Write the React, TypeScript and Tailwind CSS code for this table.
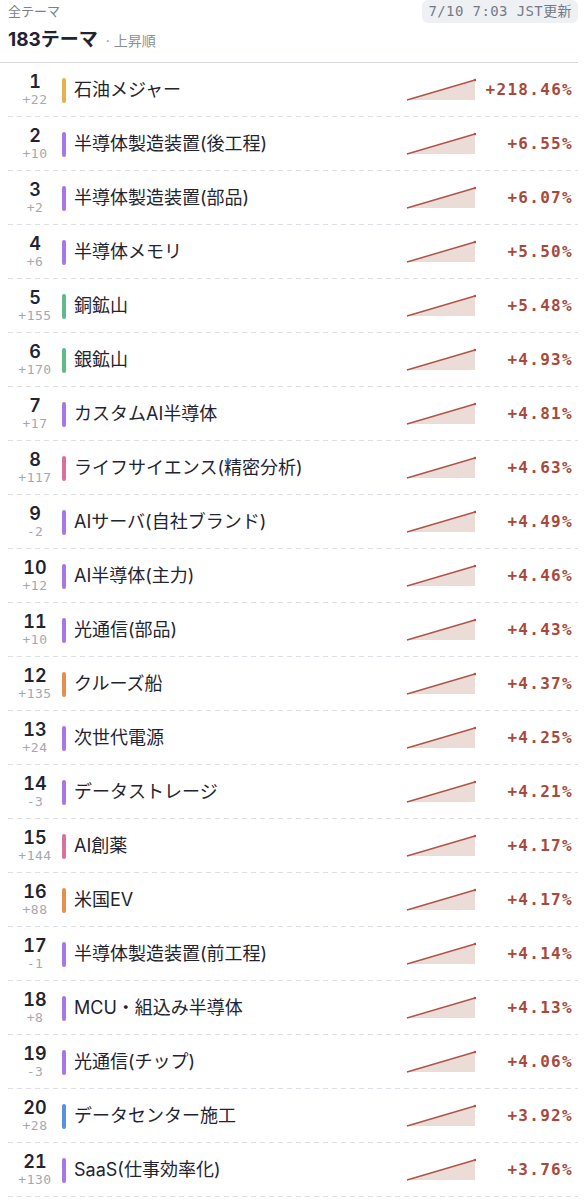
const rows = [
    { rank: 1, chg: '+22', name: '石油メジャー', color: 'bg-[#e6b04e]', pct: '+218.46%' },
    { rank: 2, chg: '+10', name: '半導体製造装置(後工程)', color: 'bg-[#a777e6]', pct: '+6.55%' },
    { rank: 3, chg: '+2', name: '半導体製造装置(部品)', color: 'bg-[#a777e6]', pct: '+6.07%' },
    { rank: 4, chg: '+6', name: '半導体メモリ', color: 'bg-[#a777e6]', pct: '+5.50%' },
    { rank: 5, chg: '+155', name: '銅鉱山', color: 'bg-[#5fbb8b]', pct: '+5.48%' },
    { rank: 6, chg: '+170', name: '銀鉱山', color: 'bg-[#5fbb8b]', pct: '+4.93%' },
    { rank: 7, chg: '+17', name: 'カスタムAI半導体', color: 'bg-[#a777e6]', pct: '+4.81%' },
    { rank: 8, chg: '+117', name: 'ライフサイエンス(精密分析)', color: 'bg-[#d9719f]', pct: '+4.63%' },
    { rank: 9, chg: '-2', name: 'AIサーバ(自社ブランド)', color: 'bg-[#a777e6]', pct: '+4.49%' },
    { rank: 10, chg: '+12', name: 'AI半導体(主力)', color: 'bg-[#a777e6]', pct: '+4.46%' },
    { rank: 11, chg: '+10', name: '光通信(部品)', color: 'bg-[#a777e6]', pct: '+4.43%' },
    { rank: 12, chg: '+135', name: 'クルーズ船', color: 'bg-[#e39050]', pct: '+4.37%' },
    { rank: 13, chg: '+24', name: '次世代電源', color: 'bg-[#a777e6]', pct: '+4.25%' },
    { rank: 14, chg: '-3', name: 'データストレージ', color: 'bg-[#a777e6]', pct: '+4.21%' },
    { rank: 15, chg: '+144', name: 'AI創薬', color: 'bg-[#d9719f]', pct: '+4.17%' },
    { rank: 16, chg: '+88', name: '米国EV', color: 'bg-[#e39050]', pct: '+4.17%' },
    { rank: 17, chg: '-1', name: '半導体製造装置(前工程)', color: 'bg-[#a777e6]', pct: '+4.14%' },
    { rank: 18, chg: '+8', name: 'MCU・組込み半導体', color: 'bg-[#a777e6]', pct: '+4.13%' },
    { rank: 19, chg: '-3', name: '光通信(チップ)', color: 'bg-[#a777e6]', pct: '+4.06%' },
    { rank: 20, chg: '+28', name: 'データセンター施工', color: 'bg-[#5b8fe0]', pct: '+3.92%' },
    { rank: 21, chg: '+130', name: 'SaaS(仕事効率化)', color: 'bg-[#a777e6]', pct: '+3.76%' },
];

const Spark = () => (
    <svg width="70" height="24" viewBox="0 0 70 24" className="shrink-0">
        <polygon points="1,22 69,2 69,22" fill="#ecdcd7" />
        <line x1="1" y1="22" x2="69" y2="2" stroke="#b0544a" strokeWidth="1.5" />
        <circle cx="69" cy="2" r="1.3" fill="#b0544a" />
    </svg>
);

const App = () => {
    return (
        <div className="w-[585px] min-h-[1200px] bg-white font-['Inter','Noto_Sans_CJK_JP',sans-serif] text-[#1f2430]">
            <div className="w-[578px]">
                <header className="pl-2 border-b border-[#d6d9de]">
                    <div className="flex items-center justify-between pt-[2px] h-[21px]">
                        <span className="text-[13px] text-[#7b8089]">全テーマ</span>
                        <span className="rounded-md bg-[#eef0f4] px-[6px] py-[1px] text-[14px] tracking-[0.4px] text-[#747a85] font-['DejaVu_Sans_Mono','Noto_Sans_CJK_JP',monospace]">
                            7/10 7:03 JST更新
                        </span>
                    </div>
                    <div className="flex items-baseline h-[41px] pt-[5px]">
                        <span className="text-[19px] font-bold">183テーマ</span>
                        <span className="ml-2 text-[14px] text-[#8a8f98]">· 上昇順</span>
                    </div>
                </header>

                <ul className="pl-2">
                    {rows.map((r) => (
                        <li
                            key={r.rank}
                            className="flex items-center h-[54px] bg-[repeating-linear-gradient(90deg,#dcdfe4_0_5px,transparent_5px_9px)] bg-bottom bg-no-repeat bg-[length:100%_1px] pr-[5px]"
                        >
                            <div className="w-[54px] flex flex-col items-center">
                                <span className="text-[18px] font-semibold leading-[19px] tabular-nums">
                                    {r.rank}
                                </span>
                                <span className="text-[13px] leading-[17px] tracking-[0.5px] text-[#a4a9b1] font-['DejaVu_Sans_Mono',monospace]">
                                    {r.chg}
                                </span>
                            </div>
                            <div className={`w-1 h-[25px] rounded-full ${r.color}`} />
                            <div className="flex-1 ml-2 text-[18px] leading-none whitespace-nowrap">
                                {r.name}
                            </div>
                            <Spark />
                            <div className="w-[97px] text-right text-[16px] font-bold tracking-[1.3px] text-[#a8493c] font-['DejaVu_Sans_Mono',monospace]">
                                {r.pct}
                            </div>
                        </li>
                    ))}
                </ul>
            </div>
        </div>
    );
};

export default App;
